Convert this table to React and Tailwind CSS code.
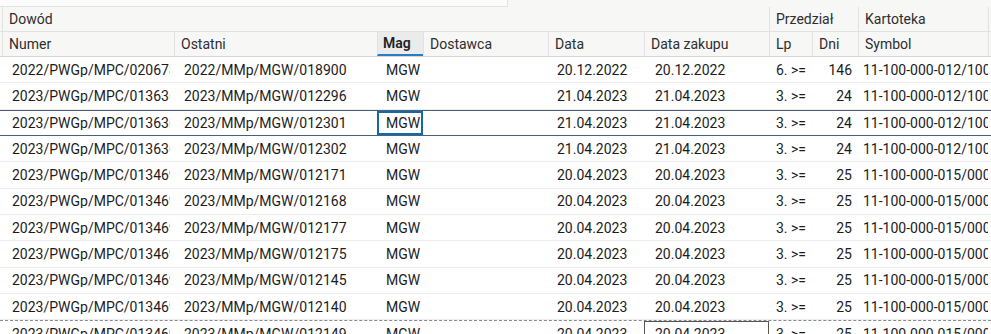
import React from "react"

const cols = [
  { key: "numer", label: "Numer", w: "w-[172px]" },
  { key: "ostatni", label: "Ostatni", w: "w-[203px]" },
  { key: "mag", label: "Mag", w: "w-[46px]" },
  { key: "dostawca", label: "Dostawca", w: "w-[125px]" },
  { key: "data", label: "Data", w: "w-[96px]" },
  { key: "zakup", label: "Data zakupu", w: "w-[125px]" },
  { key: "lp", label: "Lp", w: "w-[43px]" },
  { key: "dni", label: "Dni", w: "w-[46px]" },
  { key: "symbol", label: "Symbol", w: "w-[130px]" },
]

const rows = [
  ["2022/PWGp/MPC/020678", "2022/MMp/MGW/018900", "20.12.2022", "6. >=", "146", "11-100-000-012/1000"],
  ["2023/PWGp/MPC/013636", "2023/MMp/MGW/012296", "21.04.2023", "3. >=", "24", "11-100-000-012/1000"],
  ["2023/PWGp/MPC/013636", "2023/MMp/MGW/012301", "21.04.2023", "3. >=", "24", "11-100-000-012/1000"],
  ["2023/PWGp/MPC/013636", "2023/MMp/MGW/012302", "21.04.2023", "3. >=", "24", "11-100-000-012/1000"],
  ["2023/PWGp/MPC/013469", "2023/MMp/MGW/012171", "20.04.2023", "3. >=", "25", "11-100-000-015/0000"],
  ["2023/PWGp/MPC/013469", "2023/MMp/MGW/012168", "20.04.2023", "3. >=", "25", "11-100-000-015/0000"],
  ["2023/PWGp/MPC/013469", "2023/MMp/MGW/012177", "20.04.2023", "3. >=", "25", "11-100-000-015/0000"],
  ["2023/PWGp/MPC/013469", "2023/MMp/MGW/012175", "20.04.2023", "3. >=", "25", "11-100-000-015/0000"],
  ["2023/PWGp/MPC/013469", "2023/MMp/MGW/012145", "20.04.2023", "3. >=", "25", "11-100-000-015/0000"],
  ["2023/PWGp/MPC/013469", "2023/MMp/MGW/012140", "20.04.2023", "3. >=", "25", "11-100-000-015/0000"],
  ["2023/PWGp/MPC/013469", "2023/MMp/MGW/012149", "20.04.2023", "3. >=", "25", "11-100-000-015/0000"],
]

function Cell({ w, className = "", children }) {
  return (
    <div className={`${w} shrink-0 h-full flex items-center overflow-hidden whitespace-nowrap ${className}`}>
      {children}
    </div>
  )
}

function Row({ r, selected, dragged }) {
  const [numer, ostatni, data, lp, dni, symbol] = r
  const rowCls = selected
    ? "border-y border-[#47617a] h-[26.33px]"
    : dragged
      ? "border-t border-dashed border-t-[#8a8a8a] h-[26.33px]"
      : "border-b border-[#ececec] h-[26.33px]"
  return (
    <div className={`flex pl-[2px] bg-white ${rowCls}`}>
      <Cell w="w-[172px]" className="pl-[10px] pr-[4px]">
        <span className="overflow-hidden">{numer}</span>
      </Cell>
      <Cell w="w-[203px]" className="pl-[10px]">{ostatni}</Cell>
      <Cell
        w="w-[46px]"
        className={selected ? "pl-[7px] border-2 border-[#1769a6]" : "pl-[9px]"}
      >
        MGW
      </Cell>
      <Cell w="w-[125px]" />
      <Cell w="w-[96px]" className="pl-[9px]">{data}</Cell>
      <Cell
        w="w-[125px]"
        className={dragged ? "pl-[10px] border border-[#555] border-b-0" : "pl-[11px]"}
      >
        {data}
      </Cell>
      <Cell w="w-[43px]" className="pl-[7px]">{lp}</Cell>
      <Cell w="w-[46px]" className="justify-end pr-[6px]">{dni}</Cell>
      <Cell w="w-[130px]" className="pl-[5px]">{symbol}</Cell>
    </div>
  )
}

export default function App() {
  return (
    <div className="w-[991px] h-[334px] overflow-hidden bg-white text-[14px] text-[#1c1c1c] font-['Roboto',sans-serif] leading-none">
      <div className="h-[7px] bg-[#f7f7f6] flex">
        <div className="w-[508px] h-full bg-[#fcfcfc] border-b border-r border-[#e3e3e3]" />
      </div>
      <div className="bg-[#f7f7f6] text-[#2e2e2e]">
        <div className="h-[25px] flex pl-[2px] border-b border-[#e2e2e2]">
          <div className="w-[767px] h-full flex items-center pl-[6px] border-l border-[#e2e2e2]">Dowód</div>
          <div className="w-[89px] h-full flex items-center pl-[6px] border-l border-[#e2e2e2]">Przedział</div>
          <div className="w-[130px] h-full flex items-center pl-[6px] border-l border-[#e2e2e2]">Kartoteka</div>
          <div className="flex-1 h-full border-l border-[#e2e2e2]" />
        </div>
        <div className="h-[25px] flex pl-[2px] border-b border-[#d6d6d6]">
          {cols.map((c) =>
            c.key === "mag" ? (
              <div
                key={c.key}
                className={`${c.w} shrink-0 h-full flex items-center pl-[5px] border-l border-[#e2e2e2] bg-[#ebebeb] border-b-2 border-b-[#2a7cc2] font-semibold text-[#222]`}
              >
                {c.label}
              </div>
            ) : (
              <div
                key={c.key}
                className={`${c.w} shrink-0 h-full flex items-center pl-[6px] border-l border-[#e2e2e2] overflow-hidden whitespace-nowrap`}
              >
                {c.label}
              </div>
            )
          )}
          <div className="flex-1 h-full border-l border-[#e2e2e2]" />
        </div>
      </div>
      {rows.map((r, i) => (
        <Row key={i} r={r} selected={i === 2} dragged={i === 10} />
      ))}
    </div>
  )
}
